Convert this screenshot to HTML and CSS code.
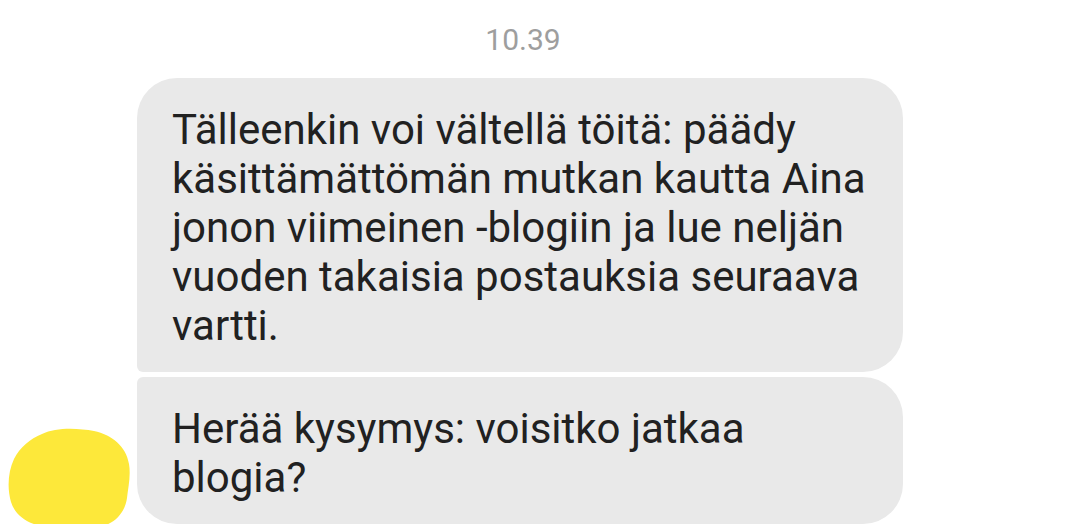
FILE: index.html
```html
<!DOCTYPE html>
<html lang="fi">
<head>
    <meta charset="UTF-8">
    <meta name="viewport" content="width=device-width, initial-scale=1.0">
    <title>Viestit</title>
    <link rel="stylesheet" href="styles.css">
</head>
<body>

<div class="thread">
    <div class="timestamp">10.39</div>

    <div class="group">
        <!-- peitetty profiilikuva -->
        <div class="avatar">
            <svg width="122" height="101" viewBox="0 0 122 101">
                <path d="M34 6 C48 -1 70 0 86 3 C104 7 118 18 121 36 C123 48 120 60 119 70 C117 84 108 95 92 99 C76 102 58 101 44 100 C24 98 8 90 3 74 C-1 60 0 44 6 31 C12 19 22 11 34 6 Z" fill="#fde83a"/>
            </svg>
        </div>

        <div class="bubbles">
            <div class="bubble first">Tälleenkin voi vältellä töitä: päädy käsittämättömän mutkan kautta Aina jonon viimeinen -blogiin ja lue neljän vuoden takaisia postauksia seuraava vartti.</div>
            <div class="bubble last">Herää kysymys: voisitko jatkaa blogia?</div>
        </div>
    </div>
</div>

</body>
</html>
```

FILE: styles.css
```css
body {
    margin: 0;
    background-color: #ffffff;
    font-family: 'Roboto', 'Noto Sans', sans-serif;
}
.thread {
    width: 1080px;
    padding-top: 22px;
}
.timestamp {
    margin-left: 137px;
    width: 772px;
    text-align: center;
    font-size: 30px;
    line-height: 36px;
    color: #9e9e9e;
    margin-bottom: 20px;
}
.group {
    display: flex;
    align-items: flex-end;
}
.avatar {
    width: 122px;
    height: 101px;
    margin-left: 8px;
    margin-right: 7px;
    margin-bottom: -5px;
}
.avatar svg {
    display: block;
}
.bubbles {
    display: flex;
    flex-direction: column;
    gap: 5px;
    width: 766px;
}

/* viestikuplat */
.bubble {
    background-color: #e9e9e9;
    color: #212121;
    font-size: 42px;
    line-height: 49px;
    padding: 27px 35px 22px 35px;
    border-radius: 40px;
}
.bubble.first {
    border-bottom-left-radius: 6px;
}
.bubble.last {
    border-top-left-radius: 6px;
}
```
